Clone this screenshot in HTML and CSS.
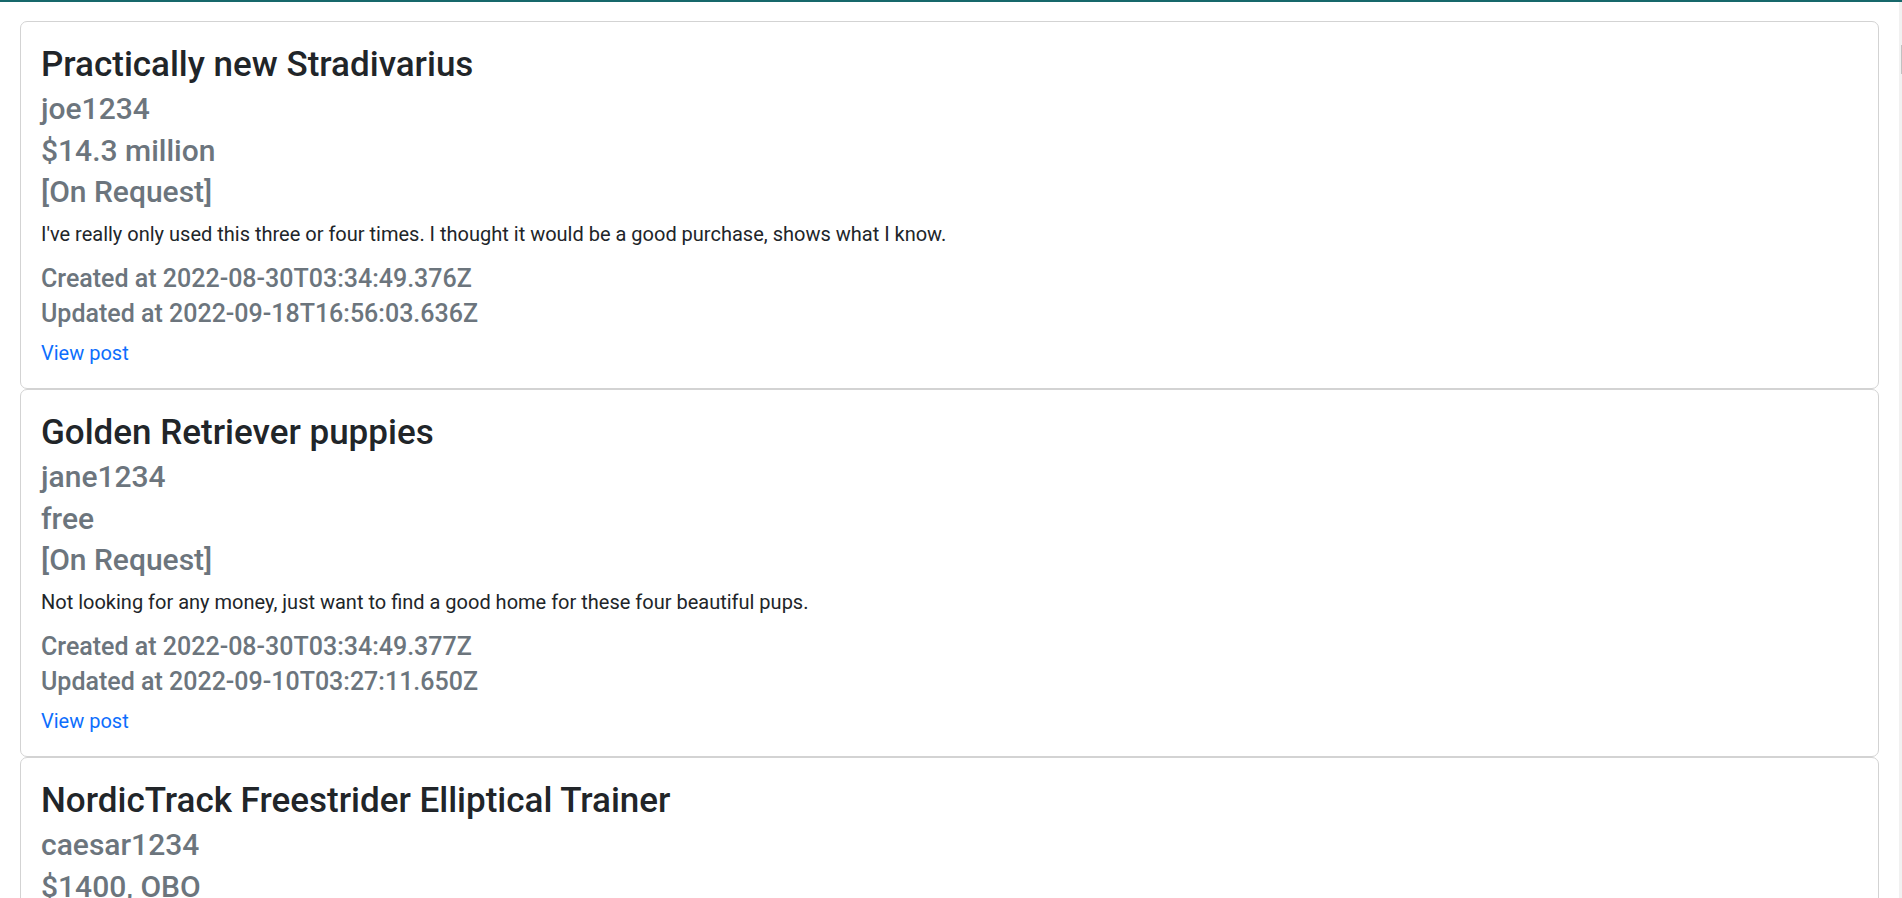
FILE: index.html
```html
<!DOCTYPE html>
<html lang="en">
<head>
<meta charset="utf-8">
<title>Posts</title>
<link rel="stylesheet" href="styles.css">
</head>
<body>
<div class="topbar"></div>
<div class="viewport">
  <main class="posts">
    <div class="card">
      <div class="card-body">
        <h3 class="card-title">Practically new Stradivarius</h3>
        <h4 class="card-subtitle">joe1234</h4>
        <h4 class="card-subtitle">$14.3 million</h4>
        <h4 class="card-subtitle">[On Request]</h4>
        <p class="card-text">I've really only used this three or four times. I thought it would be a good purchase, shows what I know.</p>
        <h5 class="card-meta">Created at 2022-08-30T03:34:49.376Z</h5>
        <h5 class="card-meta">Updated at 2022-09-18T16:56:03.636Z</h5>
        <a class="card-link" href="#">View post</a>
      </div>
    </div>
    <div class="card">
      <div class="card-body">
        <h3 class="card-title">Golden Retriever puppies</h3>
        <h4 class="card-subtitle">jane1234</h4>
        <h4 class="card-subtitle">free</h4>
        <h4 class="card-subtitle">[On Request]</h4>
        <p class="card-text">Not looking for any money, just want to find a good home for these four beautiful pups.</p>
        <h5 class="card-meta">Created at 2022-08-30T03:34:49.377Z</h5>
        <h5 class="card-meta">Updated at 2022-09-10T03:27:11.650Z</h5>
        <a class="card-link" href="#">View post</a>
      </div>
    </div>
    <div class="card">
      <div class="card-body">
        <h3 class="card-title">NordicTrack Freestrider Elliptical Trainer</h3>
        <h4 class="card-subtitle">caesar1234</h4>
        <h4 class="card-subtitle">$1400, OBO</h4>
        <h4 class="card-subtitle">[On Request]</h4>
        <p class="card-text">Barely used, in great shape. Pick up only.</p>
        <h5 class="card-meta">Created at 2022-08-30T03:34:49.378Z</h5>
        <h5 class="card-meta">Updated at 2022-09-10T03:27:11.650Z</h5>
        <a class="card-link" href="#">View post</a>
      </div>
    </div>
  </main>
  <div class="scrollbar"><div class="scrollbar-thumb"></div></div>
</div>
</body>
</html>
```
FILE: styles.css
```css
html, body {
  margin: 0;
  padding: 0;
  height: 100%;
  overflow: hidden;
}
body {
  display: flex;
  flex-direction: column;
  font-family: Roboto, "Liberation Sans", sans-serif;
  color: #212529;
  background: #fff;
}
.topbar {
  height: 2px;
  flex: none;
  background: #17686b;
}
.viewport {
  flex: 1;
  min-height: 0;
  display: flex;
}
.posts {
  flex: 1;
  min-width: 0;
  overflow: hidden;
  padding: 19px 20px 0 20px;
}
.scrollbar {
  flex: none;
  width: 3px;
  background: #f1f1f1;
  display: flex;
  justify-content: flex-end;
}
.scrollbar-thumb {
  width: 1px;
  height: 29px;
  margin-top: 43px;
  background: #c1c1c1;
}
.card {
  border: 1px solid #d3d3d3;
  border-radius: 7px;
  background: #fff;
}
.card-body {
  padding: 20px;
  display: flex;
  flex-direction: column;
  align-items: flex-start;
}
.card-title {
  margin: 0;
  font-size: 35px;
  font-weight: 500;
  line-height: 46px;
  color: #212529;
}
.card-subtitle {
  margin: 0;
  font-size: 30px;
  font-weight: 500;
  line-height: 41.5px;
  color: #6c757d;
}
.card-text {
  margin: 6px 0 0 0;
  font-size: 20px;
  line-height: 30px;
  color: #212529;
}
.card-meta {
  margin: 0;
  font-size: 25px;
  font-weight: 500;
  line-height: 35px;
  color: #6c757d;
}
.card-text + .card-meta {
  margin-top: 12px;
}
.card-link {
  margin-top: 7.5px;
  font-size: 20px;
  line-height: 30px;
  color: #0d6efd;
  text-decoration: none;
}
```
